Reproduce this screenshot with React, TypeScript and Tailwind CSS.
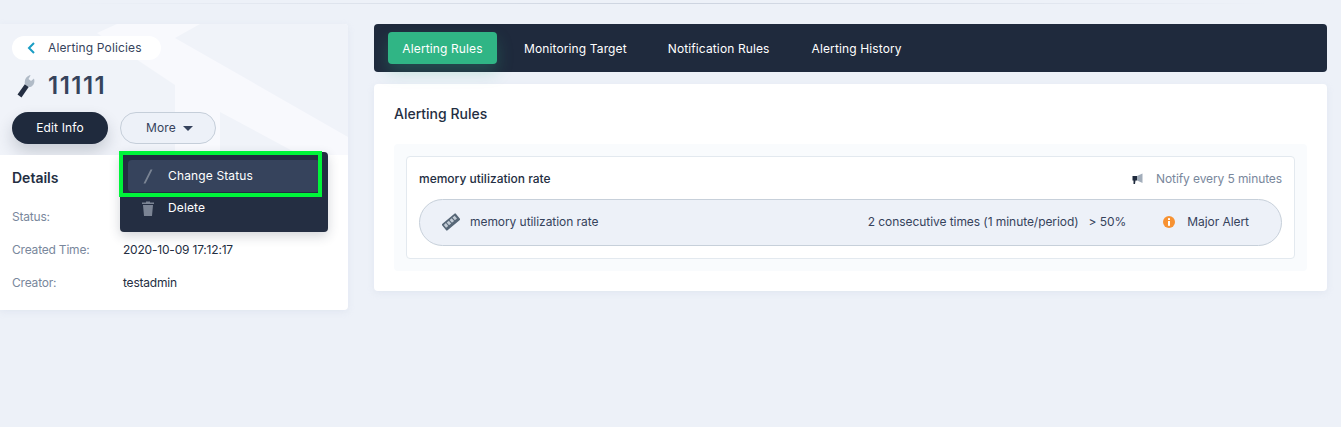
import React from "react";

const Wrench = () => (
  <svg width="18" height="24" viewBox="0 0 18 24">
    <path d="M0.5 20.5 L8 10 L12 12.5 L4.5 23.5 Z" fill="#242e42" />
    <path d="M8 10.5 C7 6 9 2.5 13 1 L13.5 1.5 L11.5 5 L14 7 L17 4.5 C18.5 9 15.5 13.5 11.5 13 Z" fill="#b1bbc7" />
  </svg>
);

const Slash = () => (
  <svg width="10" height="15" viewBox="0 0 10 15"><path d="M0.5 14.5 L7.5 0.5 L9.5 0.5 L2.5 14.5 Z" fill="#7b8494" /></svg>
);

const Trash = () => (
  <svg width="12" height="15" viewBox="0 0 12 15" fill="#7b8494">
    <path d="M0 1.5 H4 V0.5 H8 V1.5 H12 V3 H0 Z" />
    <path d="M1 4 H11 L10 15 H2 Z" />
  </svg>
);

const Ram = () => (
  <svg width="18" height="18" viewBox="0 0 18 18">
    <g transform="rotate(-40 9 9)">
      <rect x="0" y="4.8" width="18" height="8.4" rx="1" fill="#566676" />
      <rect x="1.6" y="6.6" width="2.8" height="3.6" fill="#c3ccd6" />
      <rect x="5.4" y="6.6" width="2.8" height="3.6" fill="#c3ccd6" />
      <rect x="9.2" y="6.6" width="2.8" height="3.6" fill="#c3ccd6" />
      <rect x="13" y="6.6" width="2.8" height="3.6" fill="#c3ccd6" />
    </g>
  </svg>
);

const Horn = () => (
  <svg width="12" height="12" viewBox="0 0 12 12">
    <path d="M0.5 3 H5 V7.5 H3.5 L3 11 H1.5 V7.5 H0.5 Z" fill="#1f2a3d" />
    <path d="M5 3 L10.5 0.5 V10 L5 7.5 Z" fill="#a3aebb" />
  </svg>
);

const Info = () => (
  <svg width="12" height="12" viewBox="0 0 12 12">
    <circle cx="6" cy="6" r="6" fill="#f79232" />
    <rect x="5" y="2.2" width="2" height="1.8" fill="#fff" />
    <rect x="5" y="5" width="2" height="4.8" fill="#fff" />
  </svg>
);

export default function App() {
  return (
    <div className="w-[1341px] h-[427px] bg-[#edf1f8] overflow-hidden text-[12px] text-[#242e42]" style={{ fontFamily: "Inter, 'Liberation Sans', sans-serif" }}>
      <div className="h-[4px] pt-[3px] px-[70px]">
        <div className="h-[1px] bg-linear-to-r from-transparent via-[#ccd3df] to-transparent" />
      </div>
      <div className="flex items-start gap-[26px] pt-[20px] pr-[14px]">
        <aside className="relative w-[348px] shrink-0 h-[286px] rounded-r-[4px] bg-white shadow-[0_2px_6px_rgba(200,210,225,0.3)]">
          <div className="relative h-[131px] bg-[#f0f3f9] overflow-hidden rounded-tr-[4px] px-[12px] pt-[12px]">
            <svg className="absolute inset-0" width="348" height="131" viewBox="0 0 348 131">
              <path d="M97 9 L117 0 L200 0 L175 14 L348 113 L348 131 L300 131 L220 88 L220 131 L175 131 L175 61 Z" fill="#f8f9fd" />
            </svg>
            <div className="relative flex items-center w-[149px] h-[24px] rounded-full bg-white pl-[14px]">
              <svg width="10" height="14" viewBox="0 0 10 14" fill="none" stroke="#1a9dc4" strokeWidth="2"><path d="M8 2 L3 7 L8 12" /></svg>
              <span className="ml-[12px] tracking-[0.14px] text-[#36435c]">Alerting Policies</span>
            </div>
            <div className="relative flex items-center h-[28px] mt-[12px] ml-[5px]">
              <Wrench />
              <span className="ml-[13px] text-[24px] leading-[28px] font-semibold text-[#36435c] tracking-[1.5px]">11111</span>
            </div>
            <div className="relative flex items-center gap-[12px] mt-[12px]">
              <div className="flex items-center justify-center w-[96px] h-[32px] rounded-full bg-[#1f2a3d] text-white tracking-[0.15px] shadow-[0_8px_16px_rgba(36,46,66,0.2)]">Edit Info</div>
              <div className="flex items-center justify-center gap-[7px] w-[96px] h-[32px] pl-[3px] rounded-full bg-[#edf1f8] border border-[#c5ced9] text-[#36435c] tracking-[0.15px]">
                <span>More</span>
                <svg width="10" height="5" viewBox="0 0 10 5"><path d="M0 0 H10 L5 5 Z" fill="#36435c" /></svg>
              </div>
            </div>
          </div>
          <div className="px-[12px] pt-[13px]">
            <div className="h-[20px] text-[14px] font-semibold leading-[20px] text-[#242e42]">Details</div>
            <dl className="mt-[20px] flex flex-col gap-[15px] leading-[18px] tracking-[-0.2px]">
              <div className="flex text-[#79879c]"><dt className="w-[111px]">Status:</dt><dd /></div>
              <div className="flex"><dt className="w-[111px] text-[#79879c]">Created Time:</dt><dd>2020-10-09 17:12:17</dd></div>
              <div className="flex"><dt className="w-[111px] text-[#79879c]">Creator:</dt><dd>testadmin</dd></div>
            </dl>
          </div>
          <div className="absolute left-[120px] top-[128px] w-[208px] h-[80px] rounded-[4px] bg-[#242e42] shadow-[0_4px_12px_rgba(36,46,66,0.2)] p-[8px] text-white tracking-[0.14px]">
            <div className="flex items-center h-[32px] rounded-[4px] bg-[#36435c] pl-[15px]">
              <Slash />
              <span className="ml-[15px]">Change Status</span>
            </div>
            <div className="flex items-center h-[32px] pl-[14px]">
              <Trash />
              <span className="ml-[14px]">Delete</span>
            </div>
            <div className="absolute left-[-1px] top-[-1px] w-[203px] h-[46px] border-[4px] border-[#00f53a] pointer-events-none" />
          </div>
        </aside>
        <main className="flex-1 min-w-0">
          <nav className="flex items-center h-[48px] rounded-[4px] bg-[#1f2a3d] px-[14px] pt-[1px] text-white tracking-[0.12px]">
            <div className="flex items-center justify-center w-[109px] h-[32px] mt-[-1px] pt-[1px] rounded-[4px] bg-[#30b585] shadow-[0_8px_16px_rgba(48,181,133,0.25)]">Alerting Rules</div>
            <div className="ml-[27px]">Monitoring Target</div>
            <div className="ml-[41px]">Notification Rules</div>
            <div className="ml-[42px]">Alerting History</div>
          </nav>
          <section className="mt-[12px] h-[207px] rounded-[4px] bg-white px-[20px] pt-[20px] shadow-[0_2px_6px_rgba(200,210,225,0.3)]">
            <h2 className="h-[20px] text-[14px] leading-[20px] font-medium text-[#242e42]">Alerting Rules</h2>
            <div className="mt-[20px] h-[127px] rounded-[4px] bg-[#f9fbfd] p-[12px]">
              <div className="h-[103px] rounded-[4px] border border-[#e3e9ef] bg-white px-[12px] pt-[12px]">
                <div className="flex items-center justify-between h-[20px]">
                  <span className="font-medium text-[#242e42]">memory utilization rate</span>
                  <span className="flex items-center gap-[12px] text-[#79879c] tracking-[-0.1px]"><Horn />Notify every 5 minutes</span>
                </div>
                <div className="flex items-center mt-[10px] h-[47px] pb-[2px] rounded-full border border-[#c7d0da] bg-[#edf1f8] pl-[22px] pr-[32px] text-[#36435c] tracking-[-0.06px]">
                  <Ram />
                  <span className="ml-[10px]">memory utilization rate</span>
                  <span className="ml-auto">2 consecutive times (1 minute/period)</span>
                  <span className="ml-[10px]">&gt; 50%</span>
                  <span className="ml-[37px] flex items-center gap-[12px]"><Info />Major Alert</span>
                </div>
              </div>
            </div>
          </section>
        </main>
      </div>
    </div>
  );
}
